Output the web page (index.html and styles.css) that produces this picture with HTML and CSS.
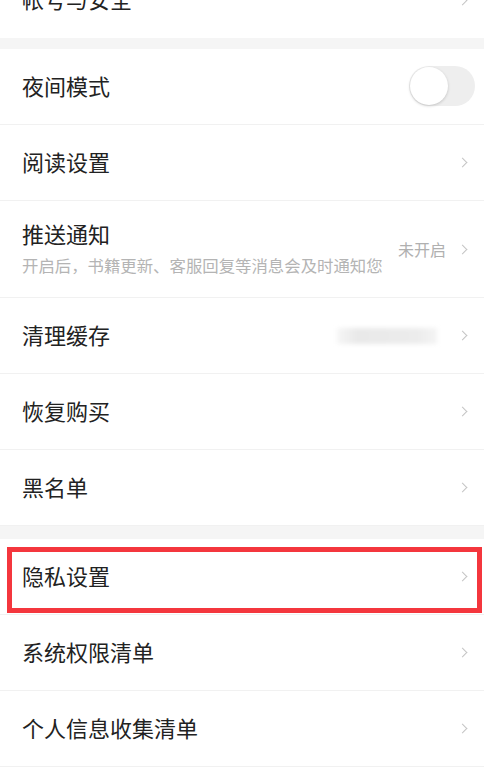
FILE: index.html
```html
<!doctype html>
<html>
<head>
	<meta charset='utf-8'>
	<title>设置</title>
	<link rel="stylesheet" href="styles.css">
</head>
<body>
<div class='setting-page'>
	<div class='setting-group setting-group-top'>
		<div class='setting-item'>
			<span class='setting-title'>帐号与安全</span>
			<span class='setting-right'><i class='arrow'></i></span>
		</div>
	</div>

	<div class='setting-group'>
		<div class='setting-item'>
			<span class='setting-title'>夜间模式</span>
			<span class='switch'><span class='switch-knob'></span></span>
		</div>
		<div class='setting-item'>
			<span class='setting-title'>阅读设置</span>
			<span class='setting-right'><i class='arrow'></i></span>
		</div>
		<div class='setting-item setting-item-tall'>
			<div class='setting-text'>
				<span class='setting-title'>推送通知</span>
				<span class='setting-desc'>开启后，书籍更新、客服回复等消息会及时通知您</span>
			</div>
			<span class='setting-right'><em class='setting-value'>未开启</em><i class='arrow'></i></span>
		</div>
		<div class='setting-item'>
			<span class='setting-title'>清理缓存</span>
			<span class='setting-right'><em class='cache-size'></em><i class='arrow'></i></span>
		</div>
		<div class='setting-item'>
			<span class='setting-title'>恢复购买</span>
			<span class='setting-right'><i class='arrow'></i></span>
		</div>
		<div class='setting-item'>
			<span class='setting-title'>黑名单</span>
			<span class='setting-right'><i class='arrow'></i></span>
		</div>
	</div>

	<div class='setting-group'>
		<div class='setting-item setting-item-mark'>
			<span class='setting-title'>隐私设置</span>
			<span class='setting-right'><i class='arrow'></i></span>
			<span class='mark-box'></span>
		</div>
		<div class='setting-item'>
			<span class='setting-title'>系统权限清单</span>
			<span class='setting-right'><i class='arrow'></i></span>
		</div>
		<div class='setting-item'>
			<span class='setting-title'>个人信息收集清单</span>
			<span class='setting-right'><i class='arrow'></i></span>
		</div>
	</div>
</div>
</body>
</html>
```

FILE: styles.css
```css
*{margin:0;padding:0;box-sizing:border-box;}
html,body{background:#fff;}
body{font-family:"Noto Sans CJK SC","Noto Sans",sans-serif;color:#222;overflow:hidden;}
em,i{font-style:normal;}

.setting-page{margin-top:-38px;background:#f5f5f5;}
.setting-group{background:#fff;}
.setting-group+.setting-group{margin-top:11px;}
.setting-group:last-child{margin-top:13px;}

.setting-item{position:relative;display:flex;align-items:center;justify-content:space-between;height:76px;padding:0 17px 4px 22px;border-bottom:1px solid #f1f1f1;}
.setting-group-top .setting-item{border-bottom:none;}
.setting-item-tall{height:97px;}
.setting-title{font-size:22px;line-height:30px;color:#222;}
.setting-text{display:flex;flex-direction:column;}
.setting-desc{font-size:16.4px;line-height:22px;color:#b4b4b4;margin-top:6px;white-space:nowrap;}

.setting-right{display:flex;align-items:center;margin-top:4px;}
.setting-value{font-size:16px;color:#b0b0b0;margin-right:13px;}
.arrow{display:block;width:7px;height:7px;border-top:1.5px solid #c4c4c4;border-right:1.5px solid #c4c4c4;transform:rotate(45deg);margin-right:1px;}

.cache-size{display:block;width:100px;height:16px;margin-right:22px;background:linear-gradient(to right,#f6f6f6,#e9e9e9 20%,#ececec 80%,#f4f4f4);filter:blur(2px);}

.switch{display:block;width:66px;height:40px;margin-right:-8px;margin-top:2px;border-radius:20px;background:#eeeeee;padding:1px;}
.switch-knob{display:block;width:38px;height:38px;border-radius:50%;background:#fff;box-shadow:0 1px 3px rgba(0,0,0,.18);}

.mark-box{position:absolute;left:7px;right:2px;top:8px;height:66px;border:5px solid #f4363d;}
```
